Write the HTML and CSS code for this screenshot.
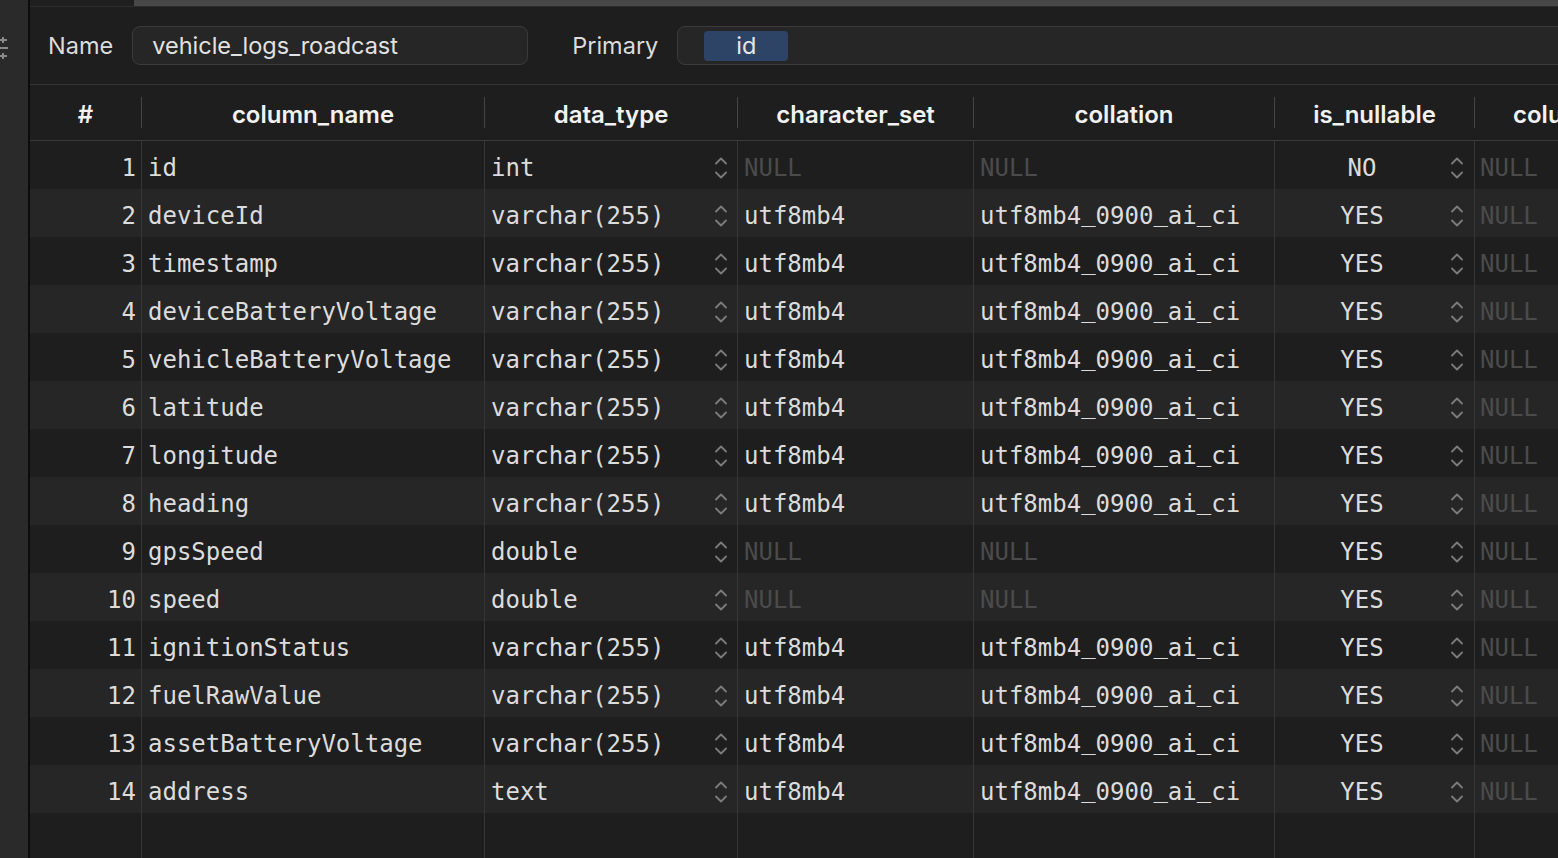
FILE: index.html
```html
<!DOCTYPE html>
<html lang="en">
<head>
<meta charset="utf-8">
<title>vehicle_logs_roadcast</title>
<link rel="stylesheet" href="styles.css">
</head>
<body>
<div class="app">
  <aside class="sidebar">
    <svg class="side-icon" width="12" height="28" viewBox="0 0 12 28">
      <path d="M0 6h7M3 3v6M0 14h8M0 22h7M3 19v6" stroke="#8a8a8a" stroke-width="2" fill="none"/>
    </svg>
  </aside>
  <main class="main">
    <div class="topstrip"><div class="topstrip-tab"></div><div class="topstrip-bar"></div></div>
    <div class="form">
      <span class="label">Name</span>
      <div class="field name-field">vehicle_logs_roadcast</div>
      <span class="label primary-label">Primary</span>
      <div class="field primary-field"><span class="pill">id</span></div>
    </div>
    <div class="table">
      <div class="row head">
        <div class="hcell">#</div>
        <div class="hcell">column_name</div>
        <div class="hcell">data_type</div>
        <div class="hcell">character_set</div>
        <div class="hcell">collation</div>
        <div class="hcell">is_nullable</div>
        <div class="hcell">column_default</div>
      </div>
      <div class="rows" id="rows"></div>
      <div class="row filler">
        <div class="cell"></div><div class="cell"></div><div class="cell"></div><div class="cell"></div><div class="cell"></div><div class="cell"></div><div class="cell"></div>
      </div>
    </div>
  </main>
</div>
<script src="app.js"></script>
</body>
</html>
```
FILE: app.js
```js
const data = [
  ["id","int",null,null,"NO"],
  ["deviceId","varchar(255)","utf8mb4","utf8mb4_0900_ai_ci","YES"],
  ["timestamp","varchar(255)","utf8mb4","utf8mb4_0900_ai_ci","YES"],
  ["deviceBatteryVoltage","varchar(255)","utf8mb4","utf8mb4_0900_ai_ci","YES"],
  ["vehicleBatteryVoltage","varchar(255)","utf8mb4","utf8mb4_0900_ai_ci","YES"],
  ["latitude","varchar(255)","utf8mb4","utf8mb4_0900_ai_ci","YES"],
  ["longitude","varchar(255)","utf8mb4","utf8mb4_0900_ai_ci","YES"],
  ["heading","varchar(255)","utf8mb4","utf8mb4_0900_ai_ci","YES"],
  ["gpsSpeed","double",null,null,"YES"],
  ["speed","double",null,null,"YES"],
  ["ignitionStatus","varchar(255)","utf8mb4","utf8mb4_0900_ai_ci","YES"],
  ["fuelRawValue","varchar(255)","utf8mb4","utf8mb4_0900_ai_ci","YES"],
  ["assetBatteryVoltage","varchar(255)","utf8mb4","utf8mb4_0900_ai_ci","YES"],
  ["address","text","utf8mb4","utf8mb4_0900_ai_ci","YES"]
];
const stepper = '<svg class="stepper" width="12" height="26" viewBox="0 0 12 26"><path d="M1 8.5L6 3.5l5 5M1 17.5L6 22.5l5-5" stroke="#7c7c7c" stroke-width="1.8" fill="none" stroke-linecap="round" stroke-linejoin="round"/></svg>';
const us = s => s.replace(/_/g, '<span class="us">_</span>');
const val = v => v === null ? '<span class="t null">NULL</span>' : `<span class="t">${us(v)}</span>`;
const rows = document.getElementById('rows');
rows.innerHTML = data.map((r, i) => `
  <div class="row${i % 2 ? ' alt' : ''}">
    <div class="cell num"><span class="t">${i + 1}</span></div>
    <div class="cell"><span class="t">${r[0]}</span></div>
    <div class="cell select"><span class="t sel-text">${r[1]}</span>${stepper}</div>
    <div class="cell cs">${val(r[2])}</div>
    <div class="cell">${val(r[3])}</div>
    <div class="cell select center"><span class="t sel-text">${r[4]}</span>${stepper}</div>
    <div class="cell"><span class="t null">NULL</span></div>
  </div>`).join('');
```
FILE: styles.css
```css
* { box-sizing: border-box; }
html, body { margin: 0; padding: 0; }
body {
  background: #1e1e1e;
  color: #dedede;
  font-family: "Inter", "Liberation Sans", sans-serif;
  overflow: hidden;
}
.app {
  display: flex;
  width: 1558px;
  height: 858px;
  overflow: hidden;
}
.sidebar {
  width: 30px;
  flex: none;
  background: #2a2a2a;
  border-right: 2px solid #0c0c0c;
  padding-top: 34px;
}
.side-icon { display: block; }
.main {
  flex: 1;
  display: flex;
  flex-direction: column;
  min-width: 0;
  overflow: hidden;
}
.topstrip {
  height: 7px;
  display: flex;
  flex: none;
  border-bottom: 1px solid #2c2c2c;
}
.topstrip-tab { width: 104px; background: #1f1f1f; }
.topstrip-bar { flex: 1; background: #474747; }
.form {
  height: 77px;
  flex: none;
  display: flex;
  align-items: center;
  padding-left: 18px;
}
.label {
  font-size: 23.5px;
  color: #dcdcdc;
  margin-right: 19px;
}
.primary-label { margin-left: 44px; }
.field {
  height: 39px;
  background: #262626;
  border: 1px solid #3b3b3b;
  border-radius: 8px;
  display: flex;
  align-items: center;
  font-size: 23.5px;
  color: #e2e2e2;
}
.name-field { width: 396px; padding-left: 19px; }
.primary-field { flex: 1; margin-right: -20px; padding-left: 26px; }
.pill {
  width: 84px;
  height: 30px;
  background: #2e4467;
  border-radius: 4px;
  display: flex;
  align-items: center;
  justify-content: center;
  color: #e6e6e6;
}
.table {
  flex: 1;
  display: flex;
  flex-direction: column;
  border-top: 1px solid #353535;
}
.row {
  display: grid;
  grid-template-columns: 112px 343px 253px 236px 301px 200px 260px;
  height: 48px;
  flex: none;
}
.row.alt { background: #262626; }
.row.head {
  height: 56px;
  border-bottom: 1px solid #3a3a3a;
  align-items: center;
}
.hcell {
  height: 31px;
  border-right: 1px solid #454545;
  display: flex;
  align-items: center;
  justify-content: center;
  font-size: 24px;
  font-weight: 600;
  color: #f2f2f2;
  white-space: nowrap;
  overflow: hidden;
  padding-top: 4px;
}
.hcell:last-child { border-right: none; justify-content: flex-start; padding-left: 38px; }
.row.filler { flex: 1; height: auto; }
.cell {
  border-right: 1px solid #363636;
  display: flex;
  align-items: center;
  padding-left: 6px;
  padding-top: 6px;
  font-family: "DejaVu Sans Mono", "Liberation Mono", monospace;
  font-size: 24px;
  color: #dcdcdc;
  white-space: nowrap;
}
.t { display: block; line-height: 34px; }
.us { position: relative; top: -3px; }
.cell:last-child { border-right: none; padding-left: 5px; }
.cell.num { justify-content: flex-end; padding-left: 0; padding-right: 5px; }
.cell.select { padding-right: 10px; }
.sel-text { flex: 1; }
.cell.center .sel-text { text-align: center; padding-right: 2px; }
.cell.center { padding-left: 0; padding-right: 11px; }
.stepper { flex: none; display: block; }
.null { color: #4b4b4b; }
```
